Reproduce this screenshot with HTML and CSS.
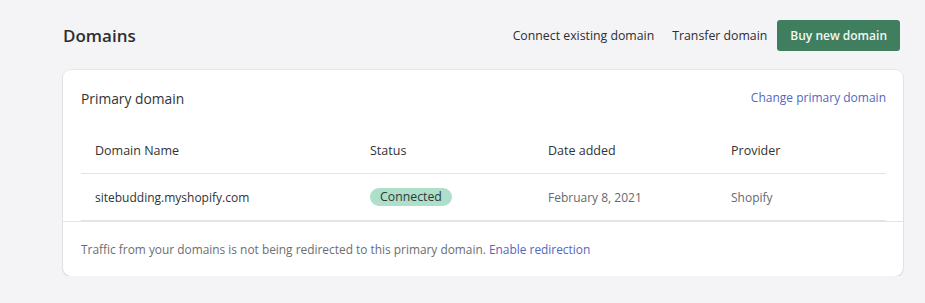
FILE: index.html
```html
<!DOCTYPE html>
<html>
<head>
<meta charset="utf-8">
<link rel="stylesheet" href="styles.css">
</head>
<body>
<div class="page">
  <div class="header">
    <h1 class="title">Domains</h1>
    <div class="actions">
      <a class="plain-btn">Connect existing domain</a>
      <a class="plain-btn">Transfer domain</a>
      <a class="primary-btn">Buy new domain</a>
    </div>
  </div>
  <div class="card">
    <div class="card-head">
      <h2 class="card-title">Primary domain</h2>
      <a class="link">Change primary domain</a>
    </div>
    <div class="table">
      <div class="row head-row">
        <div class="cell c1">Domain Name</div>
        <div class="cell c2">Status</div>
        <div class="cell c3">Date added</div>
        <div class="cell c4">Provider</div>
      </div>
      <div class="row body-row">
        <div class="cell c1 dark">sitebudding.myshopify.com</div>
        <div class="cell c2"><span class="badge">Connected</span></div>
        <div class="cell c3 muted">February 8, 2021</div>
        <div class="cell c4 muted">Shopify</div>
      </div>
    </div>
    <div class="card-foot">
      Traffic from your domains is not being redirected to this primary domain. <a class="link">Enable redirection</a>
    </div>
  </div>
</div>
</body>
</html>
```

FILE: styles.css
```css
html, body {
  margin: 0;
  padding: 0;
  background: #f4f4f7;
  font-family: "Open Sans", "Noto Sans", sans-serif;
  color: #303336;
}
.page {
  width: 840px;
  margin-left: 63px;
  padding-top: 19px;
}
.header {
  display: flex;
  align-items: center;
  justify-content: space-between;
  padding-right: 3px;
  height: 33px;
}
.title {
  margin: 0;
  font-size: 17px;
  font-weight: 600;
  color: #2c2e31;
}
.actions {
  display: flex;
  align-items: center;
}
.plain-btn {
  font-size: 12.3px;
  color: #2c2e31;
  margin-right: 18px;
}
.plain-btn + .plain-btn { margin-right: 10px; }
.primary-btn {
  display: flex;
  align-items: center;
  height: 31px;
  padding: 0 13px;
  background: #3f7e5f;
  color: #f3f8f5;
  font-weight: 600;
  font-size: 12px;
  border-radius: 3px;
  box-sizing: border-box;
}
.card {
  margin-top: 18px;
  background: #fff;
  border-radius: 8px;
  box-shadow: 0 0 0 1px rgba(0,0,0,0.04), 0 1px 2px rgba(0,0,0,0.12);
}
.card-head {
  display: flex;
  justify-content: space-between;
  align-items: center;
  padding: 18px 17px 0 18px;
  height: 18px;
}
.card-title {
  margin: 0;
  font-size: 13.8px;
  font-weight: 500;
  color: #303336;
  position: relative;
  top: 1px;
}
.link {
  color: #5466c0;
  font-size: 12px;
}
.table {
  margin: 21px 17px 0 18px;
}
.row {
  display: flex;
  align-items: center;
  border-bottom: 1px solid #e3e4e6;
}
.head-row { height: 46px; }
.body-row { height: 46px; }
.cell {
  font-size: 12px;
  box-sizing: border-box;
}
.c1 { width: 289px; padding-left: 14px; }
.c2 { width: 178px; }
.c3 { width: 183px; }
.c4 { flex: 1; }
.head-row .cell { font-weight: 500; color: #303336; font-size: 12.5px; }
.dark { color: #303336; }
.muted { color: #66696d; }
.badge {
  display: inline-block;
  background: #addfca;
  color: #2f3a35;
  border-radius: 10px;
  padding: 1px 10px 1px;
  line-height: 16px;
  font-size: 12.3px;
}
.card-foot {
  border-top: 1px solid #e3e4e6;
  padding: 19px 18px 19px;
  font-size: 11.9px;
  color: #6b6e72;
}
.card-foot .link { font-size: 11.9px; }
```
